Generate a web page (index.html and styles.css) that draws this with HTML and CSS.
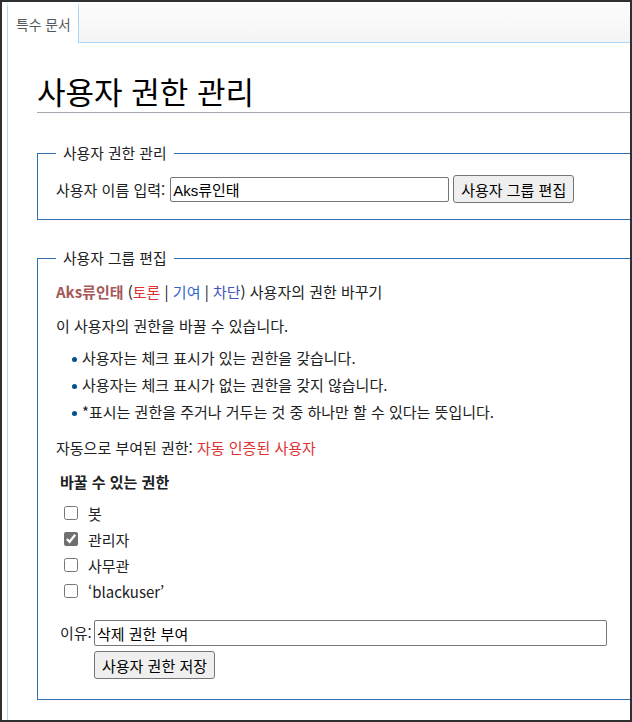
FILE: index.html
```html
<!DOCTYPE html>
<html lang="ko">
<head>
<meta charset="utf-8">
<title>사용자 권한 관리</title>
<link rel="stylesheet" href="styles.css">
</head>
<body>
<div class="frame">
  <div class="head">
    <div class="tab">특수 문서</div>
    <div class="head-rest"></div>
  </div>
  <div class="content">
    <h1 class="title">사용자 권한 관리</h1>
    <fieldset class="box box-search">
      <legend>사용자 권한 관리</legend>
      <div class="row">
        <label class="lbl" for="user">사용자 이름 입력:</label>
        <input id="user" class="text user" type="text" value="Aks류인태">
        <button class="btn" type="button">사용자 그룹 편집</button>
      </div>
    </fieldset>
    <fieldset class="box box-groups">
      <legend>사용자 그룹 편집</legend>
      <p class="who"><a class="user-link">Aks류인태</a> (<a class="talk">토론</a> | <a class="contrib">기여</a> | <a class="block">차단</a>) 사용자의 권한 바꾸기</p>
      <p class="intro">이 사용자의 권한을 바꿀 수 있습니다.</p>
      <ul class="rules">
        <li>사용자는 체크 표시가 있는 권한을 갖습니다.</li>
        <li>사용자는 체크 표시가 없는 권한을 갖지 않습니다.</li>
        <li>*표시는 권한을 주거나 거두는 것 중 하나만 할 수 있다는 뜻입니다.</li>
      </ul>
      <p class="auto-line">자동으로 부여된 권한: <a class="auto">자동 인증된 사용자</a></p>
      <div class="groups">
        <h4 class="groups-title">바꿀 수 있는 권한</h4>
        <div class="checks">
          <label class="check"><input type="checkbox"><span>봇</span></label>
          <label class="check"><input type="checkbox" checked><span>관리자</span></label>
          <label class="check"><input type="checkbox"><span>사무관</span></label>
          <label class="check"><input type="checkbox"><span>‘blackuser’</span></label>
        </div>
        <div class="reason">
          <label class="reason-lbl" for="reason">이유:</label>
          <div class="reason-fields">
            <input id="reason" class="text reason-input" type="text" value="삭제 권한 부여">
            <button class="btn" type="button">사용자 권한 저장</button>
          </div>
        </div>
      </div>
    </fieldset>
  </div>
</div>
</body>
</html>
```

FILE: styles.css
```css
html, body {
  margin: 0;
  padding: 0;
  background: #fff;
}

.frame {
  box-sizing: border-box;
  width: 632px;
  height: 722px;
  border: 2px solid #303030;
  overflow: hidden;
  background: #fff;
  font-family: "Noto Sans CJK KR", "Liberation Sans", sans-serif;
  font-size: 15px;
  color: #202122;
}

.head {
  display: flex;
  height: 41px;
  margin-left: 5px;
  width: 700px;
}

.tab {
  box-sizing: border-box;
  width: 72px;
  height: 41px;
  padding: 13px 0 0 8px;
  font-size: 13.8px;
  line-height: 19px;
  color: #54595d;
  background: #fff;
  border-left: 1px solid #cfe8f9;
  border-right: 1px solid #a7d7f9;
  border-image: linear-gradient(to bottom, rgba(167, 215, 249, 0) 0, #a7d7f9 6px) 1;
}

.head-rest {
  flex: 1;
  height: 40px;
  background: linear-gradient(to bottom, #fdfdfd 0, #f4f4f4 100%);
  border-bottom: 1px solid #a7d7f9;
}

.content {
  width: 700px;
  margin-left: 5px;
  border-left: 1px solid #a7d7f9;
  padding: 30px 0 40px 29px;
}

.title {
  margin: 0;
  font-size: 31px;
  font-weight: normal;
  line-height: 36px;
  padding-bottom: 3px;
  border-bottom: 1px solid #a2a9b1;
  color: #000;
}

.box {
  margin: 0;
  padding: 0 18px;
  border: 1px solid #2f6fb3;
  min-width: 0;
}

.box legend {
  padding: 0 7px;
  line-height: 20px;
  font-size: 14.8px;
}

.box-search {
  margin-top: 30px;
  padding-top: 12px;
  padding-bottom: 16px;
}

.row {
  display: flex;
  align-items: center;
  height: 28px;
}

.lbl {
  margin-right: 5px;
}

.text {
  box-sizing: border-box;
  height: 25px;
  border: 1px solid #767676;
  border-radius: 2px;
  padding: 0 2px;
  font-family: "Liberation Sans", "Noto Sans CJK KR", sans-serif;
  font-size: 15px;
  color: #000;
  background: #fff;
  margin: 0;
}

.user {
  width: 279px;
}

.btn {
  box-sizing: border-box;
  height: 28px;
  padding: 0 7px;
  margin: 0 0 0 4px;
  border: 1px solid #767676;
  border-radius: 3px;
  background: #efefef;
  font-family: "Noto Sans CJK KR", "Liberation Sans", sans-serif;
  font-size: 15px;
  color: #000;
}

.box-groups {
  margin-top: 28px;
  padding-top: 13px;
  padding-bottom: 20px;
}

.box-groups p {
  margin: 0;
  line-height: 22px;
}

.who a {
  text-decoration: none;
}

.user-link {
  font-weight: bold;
  color: #a55858;
}

.talk {
  color: #d33;
}

.contrib {
  color: #36c;
}

.block {
  color: #4455bb;
}

.intro {
  margin-top: 12px !important;
}

.rules {
  list-style: none;
  margin: 10px 0 0 0;
  padding: 0 0 0 26px;
}

.rules li {
  position: relative;
  line-height: 22px;
  margin-bottom: 5px;
}

.rules li::before {
  content: "";
  position: absolute;
  left: -10px;
  top: 10px;
  width: 5px;
  height: 5px;
  border-radius: 50%;
  background: #00528c;
}

.auto-line {
  margin-top: 14px !important;
}

.auto {
  color: #d33;
  text-decoration: none;
}

.groups {
  padding-left: 4px;
}

.groups-title {
  margin: 12px 0 0 0;
  font-size: 15px;
  line-height: 22px;
  font-weight: bold;
}

.checks {
  margin-top: 7px;
  display: flex;
  flex-direction: column;
}

.check {
  display: flex;
  align-items: center;
  height: 26px;
}

.check input {
  width: 14px;
  height: 14px;
  margin: 0 10px 0 4px;
  accent-color: #6f6f6f;
}

.reason {
  display: flex;
  margin-top: 16px;
}

.reason-lbl {
  line-height: 26px;
  width: 34px;
}

.reason-fields {
  display: flex;
  flex-direction: column;
  align-items: flex-start;
  gap: 5px;
}

.reason-input {
  width: 513px;
  height: 26px;
  font-family: "Noto Sans CJK KR", "Liberation Sans", sans-serif;
}

.reason-fields .btn {
  margin-left: 0;
}
```
